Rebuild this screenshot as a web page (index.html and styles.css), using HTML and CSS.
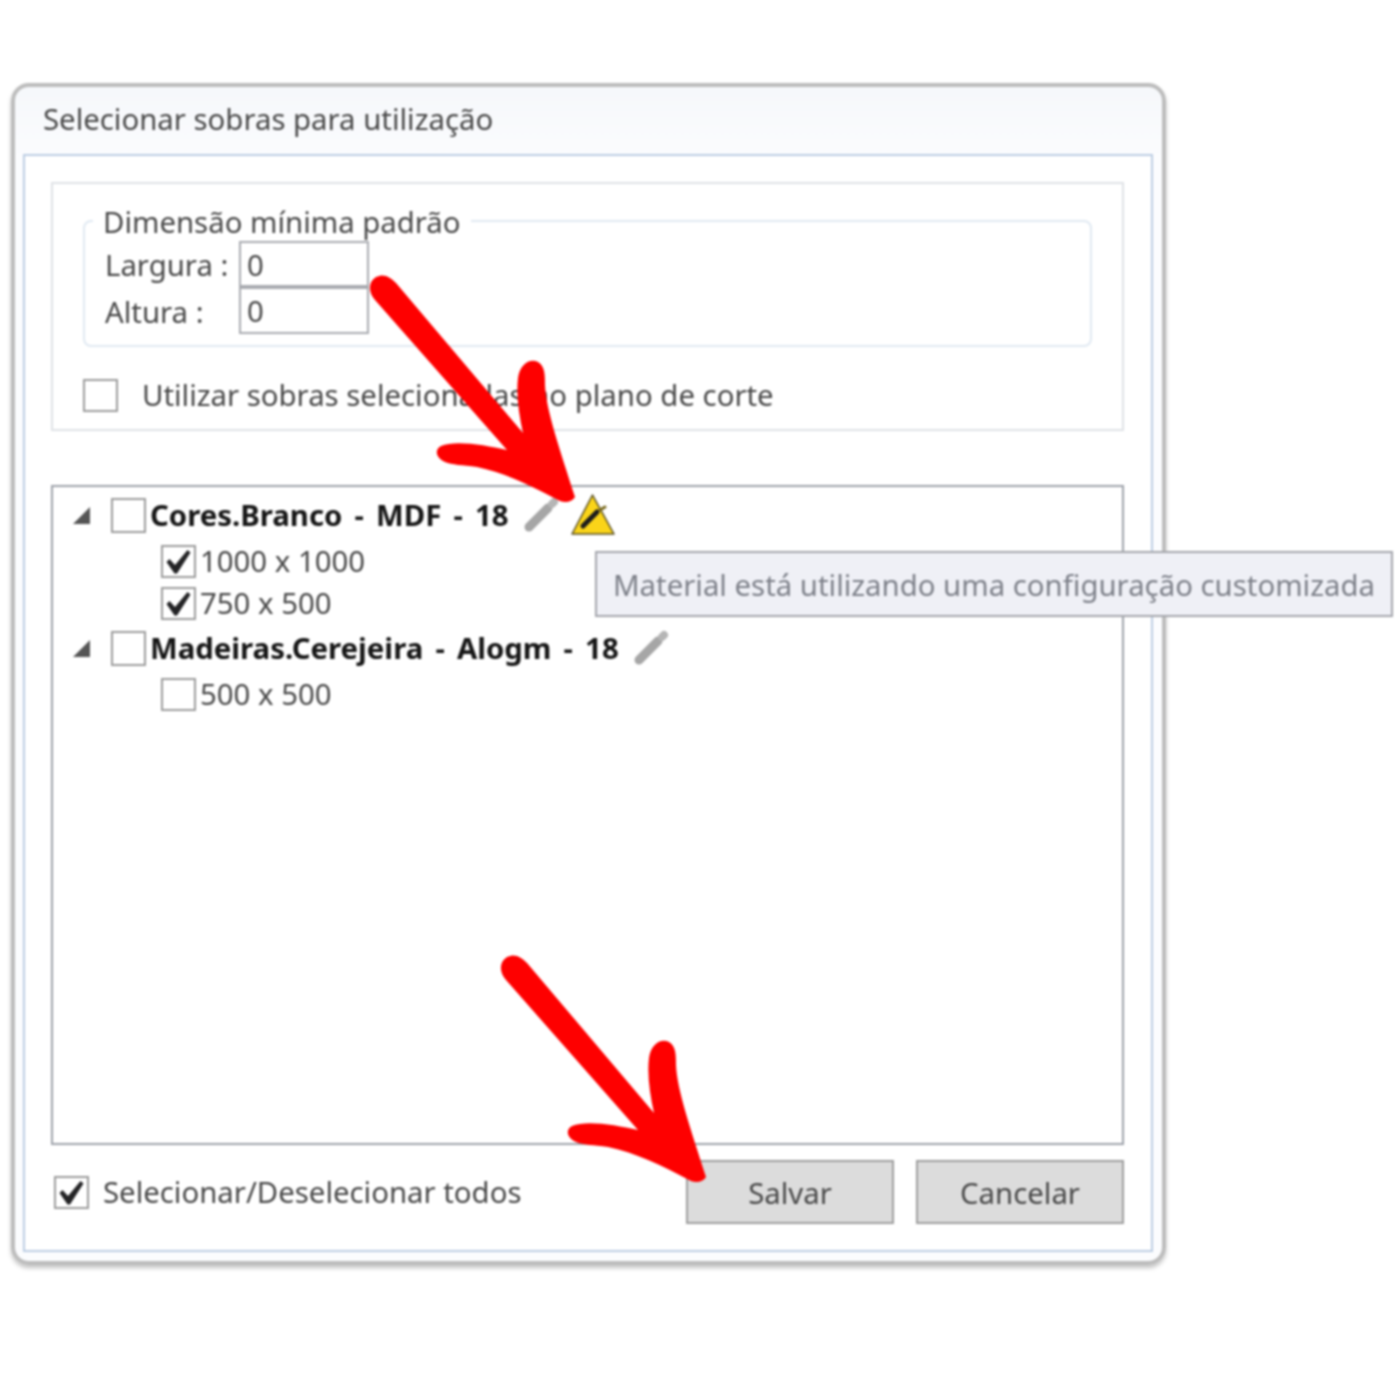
FILE: index.html
```html
<!DOCTYPE html>
<html lang="pt">
<head>
  <meta charset="UTF-8">
  <title>Selecionar sobras para utilização</title>
  <link rel="stylesheet" href="styles.css">
</head>
<body>
<svg width="0" height="0" class="defs">
  <defs>
    <symbol id="check" viewBox="0 0 30 29">
      <path d="M3 15l3-3 5.500 6L24 3l3 2.500-13.500 21h-2.500z" fill="#232325"/>
    </symbol>
    <symbol id="pencil" viewBox="0 0 36 36">
      <path d="M6 30L25 11" stroke="#a6a6a6" stroke-width="9" stroke-linecap="round" fill="none"/>
      <path d="M29 7l2-2" stroke="#b5b5b5" stroke-width="8" stroke-linecap="round" fill="none"/>
    </symbol>
  </defs>
</svg>
<div class="window">
  <div class="title">Selecionar sobras para utilização</div>
  <div class="content">
    <div class="group">
      <fieldset class="dims">
        <legend>Dimensão mínima padrão</legend>
        <div class="dim-row">
          <label>Largura :</label>
          <div class="input">0</div>
        </div>
        <div class="dim-row">
          <label>Altura :</label>
          <div class="input">0</div>
        </div>
      </fieldset>
      <div class="use-row">
        <span class="box"></span>
        <span>Utilizar sobras selecionadas no plano de corte</span>
      </div>
    </div>

    <div class="tree">
      <div class="node">
        <span class="expander"></span>
        <span class="box big"></span>
        <b>Cores.Branco - MDF - 18</b>
        <svg class="pencil"><use href="#pencil"/></svg>
        <svg class="warn" viewBox="0 0 44 42">
          <path d="M21.500 1L43 40H1z" fill="#fad419" stroke="#5a5024" stroke-width="1.500" stroke-linejoin="round"/>
          <path d="M12 32L26 18" stroke="#1c1c1c" stroke-width="5" stroke-linecap="round"/>
          <path d="M29 16l5-3" stroke="#7a6a1e" stroke-width="3" stroke-linecap="round"/>
        </svg>
      </div>
      <div class="leaf">
        <span class="box"><svg class="tick"><use href="#check"/></svg></span>
        <span>1000 x 1000</span>
      </div>
      <div class="leaf">
        <span class="box"><svg class="tick"><use href="#check"/></svg></span>
        <span>750 x 500</span>
      </div>
      <div class="node second">
        <span class="expander"></span>
        <span class="box big"></span>
        <b>Madeiras.Cerejeira - Alogm - 18</b>
        <svg class="pencil"><use href="#pencil"/></svg>
      </div>
      <div class="leaf">
        <span class="box"></span>
        <span>500 x 500</span>
      </div>
    </div>

    <div class="footer">
      <div class="all">
        <span class="box"><svg class="tick"><use href="#check"/></svg></span>
        <span>Selecionar/Deselecionar todos</span>
      </div>
      <div class="btn">Salvar</div>
      <div class="btn">Cancelar</div>
    </div>
  </div>
</div>

<div class="tooltip">Material está utilizando uma configuração customizada</div>

<svg class="arrows" viewBox="0 0 1400 1400">
  <defs>
    <path id="arrow" d="M575 497C572 502 566 503 560 501C530 485 505 473 477 467C462 465 452 465 445 462C436 458 434 450 441 446C455 440 485 445 507 450L375 300C368 292 368 282 376 277C384 273 390 277 396 283L523 433C519 415 516 395 518 378C520 364 530 358 538 362C545 366 545 375 545 385C546 410 560 450 575 497Z" fill="#fe0000"/>
  </defs>
  <use href="#arrow"/>
  <use href="#arrow" transform="translate(131 680)"/>
</svg>
</body>
</html>
```

FILE: styles.css
```css
* {
  box-sizing: border-box;
}
html, body {
  margin: 0;
  background: #fff;
}
body {
  width: 1400px;
  height: 1400px;
  padding: 83px 0 0 11px;
  font-family: "Noto Sans", "Open Sans", sans-serif;
  font-size: 29.35px;
  color: #484848;
  filter: blur(0.9px);
  overflow: hidden;
  position: relative;
}
.defs {
  position: absolute;
}
.window {
  width: 1155px;
  height: 1182px;
  border: 4px solid #bdbdbd;
  border-radius: 18px;
  background: linear-gradient(#f6f8fb, #fbfcfe 70px);
  box-shadow: 0 3px 4px #c4c4c4;
  padding: 0 9px 10px 8px;
  display: flex;
  flex-direction: column;
}
.title {
  height: 67px;
  padding-left: 20px;
  line-height: 64px;
  flex: none;
}
.content {
  flex: 1;
  background: #fff;
  border: 2px solid #bccde3;
  padding: 26px 27px 26px 26px;
}
.group {
  height: 249px;
  border: 2px solid #dfe2e6;
  padding: 17px 30px 0;
}
.dims {
  margin: 0;
  height: 146px;
  border: 2px solid #e0e9f2;
  border-radius: 8px;
  padding: 0 0 12px 20px;
}
.dims legend {
  margin-left: -12px;
  padding: 0 10px;
  line-height: 42px;
  height: 40px;
}
.dim-row {
  display: flex;
  height: 46px;
  align-items: center;
}
.dim-row + .dim-row {
  height: 47px;
}
.dim-row label {
  width: 134px;
  padding-top: 2px;
}
.input {
  width: 130px;
  height: 100%;
  border: 2px solid #a9abb0;
  padding-left: 6px;
  line-height: 44px;
}
.use-row {
  display: flex;
  align-items: center;
  gap: 24px;
  margin-top: 28px;
}
.box {
  width: 35px;
  height: 33px;
  flex: none;
  border: 2px solid #9c9c9c;
  background: #fff;
  display: block;
}
.box.big {
  height: 35px;
}
.tick {
  display: block;
  width: 31px;
  height: 29px;
}
.tree {
  height: 660px;
  margin-top: 54px;
  border: 2px solid #9ea2aa;
  padding-top: 5px;
}
.node {
  height: 46px;
  margin-bottom: 2px;
  padding-left: 20px;
  display: flex;
  align-items: center;
  color: #161616;
}
.node.second {
  margin-top: 1px;
}
.node b {
  margin-left: 4px;
  word-spacing: 4.5px;
}
.expander {
  width: 0;
  height: 0;
  margin-right: 21px;
  border-left: 17px solid transparent;
  border-bottom: 17px solid #555;
}
.pencil {
  width: 36px;
  height: 36px;
  margin-left: 14px;
}
.warn {
  width: 44px;
  height: 42px;
  margin-left: 12px;
}
.leaf {
  height: 42px;
  padding-left: 108px;
  display: flex;
  align-items: center;
  gap: 4px;
}
.footer {
  display: flex;
  align-items: center;
  margin-top: 15px;
}
.all {
  flex: 1;
  display: flex;
  align-items: center;
  gap: 14px;
  padding-left: 3px;
}
.btn {
  width: 208px;
  height: 64px;
  margin-left: 22px;
  background: #dcdcdc;
  border: 2px solid #9f9f9f;
  text-align: center;
  line-height: 63px;
}
.tooltip {
  position: absolute;
  left: 595px;
  top: 551px;
  width: 798px;
  height: 66px;
  background: #eff0f6;
  border: 2px solid #a4a6ac;
  color: #7d8089;
  padding-left: 16px;
  line-height: 64px;
  white-space: nowrap;
}
.arrows {
  position: absolute;
  left: 0;
  top: 0;
  width: 1400px;
  height: 1400px;
}
```
